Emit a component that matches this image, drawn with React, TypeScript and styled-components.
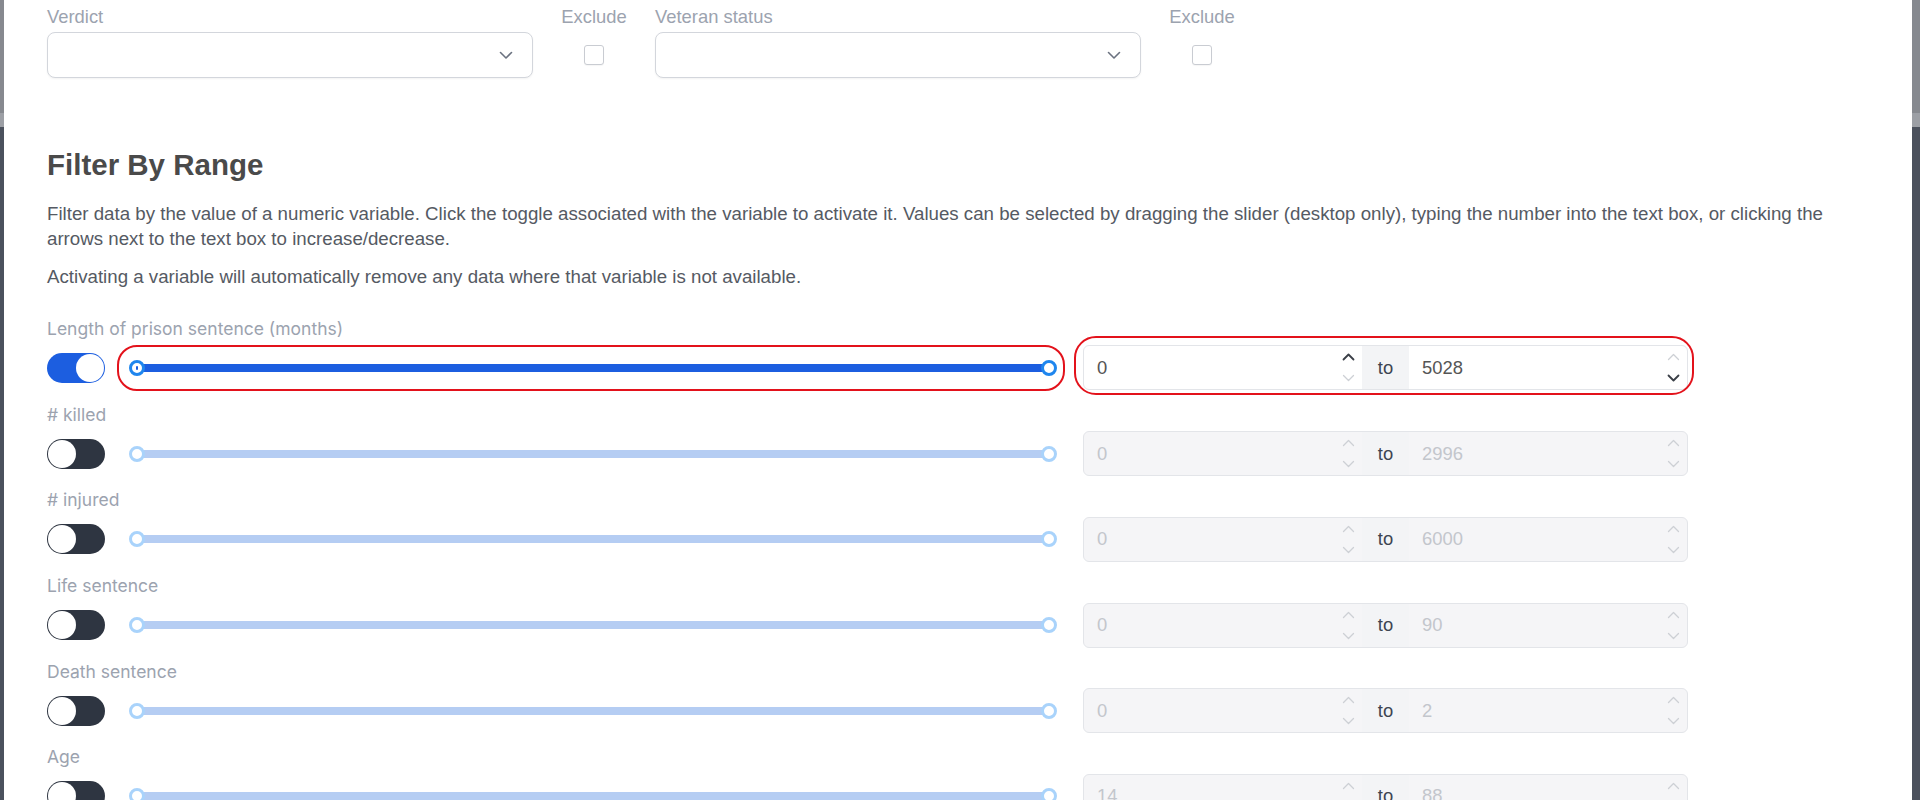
import styled, { createGlobalStyle } from 'styled-components'

const GlobalStyle = createGlobalStyle`
  html, body {
    margin: 0;
    padding: 0;
    overflow: hidden;
  }
  body {
    min-height: 800px;
    font-family: "Liberation Sans", Arial, sans-serif;
    background: linear-gradient(
      to bottom,
      #86898f 0,
      #86898f 113px,
      #9c9fa5 113px,
      #9c9fa5 127px,
      #4b515d 127px
    );
  }
`

const Modal = styled.div`
  margin: 0 8px 0 4px;
  min-height: 800px;
  background: #fff;
  padding: 6px 47px 0 43px;
  box-sizing: border-box;
`

const FilterGrid = styled.div`
  display: grid;
  grid-template-columns: 486px 66px 486px 66px;
  column-gap: 28px;
`

const Field = styled.div<{ $center?: boolean }>`
  display: flex;
  flex-direction: column;
  align-items: ${p => (p.$center ? 'center' : 'stretch')};
`

const FieldLabel = styled.div`
  font-size: 18.4px;
  line-height: 22px;
  color: #9ca3af;
  margin-bottom: 4px;
  white-space: nowrap;
`

const Select = styled.div`
  height: 46px;
  box-sizing: border-box;
  border: 1px solid #d3d6dc;
  border-radius: 8px;
  background: #fff;
  box-shadow: 0 1px 2px rgba(0, 0, 0, 0.05);
  display: flex;
  align-items: center;
  justify-content: flex-end;
  padding-right: 19px;
  color: #6b7280;
`

const CheckCell = styled.div`
  height: 46px;
  display: flex;
  align-items: center;
`

const Checkbox = styled.div`
  width: 20px;
  height: 20px;
  box-sizing: border-box;
  border: 1px solid #c9ccd2;
  border-radius: 3px;
  background: #fff;
  box-shadow: 0 1px 1px rgba(0, 0, 0, 0.04);
`

const Title = styled.h2`
  margin: 69.6px 0 18.6px;
  font-size: 29.5px;
  line-height: 34.8px;
  font-weight: 700;
  color: #4a4a4a;
`

const Description = styled.p<{ $last?: boolean }>`
  margin: 0 0 ${p => (p.$last ? '29px' : '13px')};
  font-size: 18.7px;
  line-height: 25px;
  color: #555a63;
`

const RangeRow = styled.div`
  margin-bottom: 12.7px;
`

const RowLabel = styled.div`
  font-family: Inter, "Liberation Sans", sans-serif;
  font-size: 17.5px;
  line-height: 22px;
  color: #9ca3af;
  margin-bottom: 5px;
`

const Controls = styled.div`
  display: flex;
  align-items: center;
  height: 46px;
`

const Toggle = styled.div<{ $on: boolean }>`
  width: 58px;
  height: 30px;
  box-sizing: border-box;
  padding: 1px;
  border-radius: 15px;
  background: ${p => (p.$on ? '#1c5ee0' : '#2e3541')};
  display: flex;
  justify-content: ${p => (p.$on ? 'flex-end' : 'flex-start')};
  margin-right: 12px;
  flex-shrink: 0;
`

const Knob = styled.div`
  width: 28px;
  height: 28px;
  border-radius: 50%;
  background: #fff;
`

const Highlight = `
  &::after {
    content: '';
    position: absolute;
    border: 2.5px solid #e3121b;
    pointer-events: none;
  }
`

const SliderBox = styled.div<{ $highlight?: boolean }>`
  position: relative;
  width: 948px;
  height: 46px;
  box-sizing: border-box;
  padding: 0 16px 0 20px;
  display: flex;
  align-items: center;
  flex-shrink: 0;
  ${p => (p.$highlight ? Highlight : '')}
  &::after {
    inset: 0;
    border-radius: 20px;
  }
`

const Track = styled.div<{ $on: boolean }>`
  position: relative;
  flex: 1;
  height: 8px;
  border-radius: 4px;
  background: ${p => (p.$on ? '#1c5ee0' : '#b5cdf3')};
`

const Thumb = styled.div<{ $on: boolean; $side: 'left' | 'right' }>`
  position: absolute;
  top: 50%;
  ${p => p.$side}: -8px;
  width: 16px;
  height: 16px;
  box-sizing: border-box;
  margin-top: -8px;
  border-radius: 50%;
  background: #fff;
  border: 3px solid ${p => (p.$on ? '#1f86ee' : '#a9d3fb')};
  display: flex;
  align-items: center;
  justify-content: center;
`

const ThumbDot = styled.div`
  width: 2px;
  height: 4px;
  border-radius: 1px;
  background: #1c5ee0;
`

const InputGroup = styled.div<{ $highlight?: boolean; $disabled?: boolean }>`
  position: relative;
  margin-left: 18px;
  width: 605px;
  height: 45px;
  box-sizing: border-box;
  border: 1px solid #e3e5e9;
  border-radius: 6px;
  background: ${p => (p.$disabled ? '#f5f5f7' : '#fff')};
  display: flex;
  ${p => (p.$highlight ? Highlight : '')}
  &::after {
    top: -10px;
    left: -10px;
    right: -7px;
    bottom: -6px;
    border-radius: 22px;
  }
`

const NumberField = styled.div<{ $disabled?: boolean }>`
  flex: 1;
  display: flex;
  align-items: center;
  justify-content: space-between;
  padding: 0 7px 0 13px;
  font-size: 18.4px;
  color: ${p => (p.$disabled ? '#c3c6cc' : '#555')};
`

const Addon = styled.div`
  width: 47px;
  flex-shrink: 0;
  background: #f3f4f6;
  display: flex;
  align-items: center;
  justify-content: center;
  font-size: 18.4px;
  color: #3d4451;
`

const Spinner = styled.div`
  display: flex;
  flex-direction: column;
  gap: 11px;
`

const Chevron = ({ up, dark }: { up?: boolean; dark?: boolean }) => (
  <svg width="13" height="10" viewBox="0 0 13 10" style={{ display: 'block' }}>
    <path
      d={up ? 'M1.5 7.5 L6.5 2.5 L11.5 7.5' : 'M1.5 2.5 L6.5 7.5 L11.5 2.5'}
      fill="none"
      stroke={dark ? '#3a3f47' : '#cdd0d5'}
      strokeWidth={dark ? 1.8 : 1.3}
      strokeLinecap="round"
      strokeLinejoin="round"
    />
  </svg>
)

const SelectChevron = () => (
  <svg width="14" height="9" viewBox="0 0 14 9">
    <path d="M1.5 1.5 L7 7 L12.5 1.5" fill="none" stroke="#6b7280" strokeWidth="1.6" strokeLinecap="round" strokeLinejoin="round" />
  </svg>
)

interface RangeSpec {
  label: string
  min: number
  max: number
  active?: boolean
}

const ranges: RangeSpec[] = [
  { label: 'Length of prison sentence (months)', min: 0, max: 5028, active: true },
  { label: '# killed', min: 0, max: 2996 },
  { label: '# injured', min: 0, max: 6000 },
  { label: 'Life sentence', min: 0, max: 90 },
  { label: 'Death sentence', min: 0, max: 2 },
  { label: 'Age', min: 14, max: 88 },
]

const RangeFilter = ({ label, min, max, active }: RangeSpec) => {
  const on = !!active
  return (
    <RangeRow>
      <RowLabel>{label}</RowLabel>
      <Controls>
        <Toggle $on={on}>
          <Knob />
        </Toggle>
        <SliderBox $highlight={on}>
          <Track $on={on}>
            <Thumb $on={on} $side="left">{on && <ThumbDot />}</Thumb>
            <Thumb $on={on} $side="right" />
          </Track>
        </SliderBox>
        <InputGroup $highlight={on} $disabled={!on}>
          <NumberField $disabled={!on}>
            <span>{min}</span>
            <Spinner>
              <Chevron up dark={on} />
              <Chevron />
            </Spinner>
          </NumberField>
          <Addon>to</Addon>
          <NumberField $disabled={!on}>
            <span>{max}</span>
            <Spinner>
              <Chevron up />
              <Chevron dark={on} />
            </Spinner>
          </NumberField>
        </InputGroup>
      </Controls>
    </RangeRow>
  )
}

const App = () => (
  <>
    <GlobalStyle />
    <Modal>
      <FilterGrid>
        <Field>
          <FieldLabel>Verdict</FieldLabel>
          <Select><SelectChevron /></Select>
        </Field>
        <Field $center>
          <FieldLabel>Exclude</FieldLabel>
          <CheckCell><Checkbox /></CheckCell>
        </Field>
        <Field>
          <FieldLabel>Veteran status</FieldLabel>
          <Select><SelectChevron /></Select>
        </Field>
        <Field $center>
          <FieldLabel>Exclude</FieldLabel>
          <CheckCell><Checkbox /></CheckCell>
        </Field>
      </FilterGrid>

      <Title>Filter By Range</Title>
      <Description>
        Filter data by the value of a numeric variable. Click the toggle associated with the variable to activate it.
        Values can be selected by dragging the slider (desktop only), typing the number into the text box, or clicking
        the arrows next to the text box to increase/decrease.
      </Description>
      <Description $last>
        Activating a variable will automatically remove any data where that variable is not available.
      </Description>

      {ranges.map(r => (
        <RangeFilter key={r.label} {...r} />
      ))}
    </Modal>
  </>
)

export default App
